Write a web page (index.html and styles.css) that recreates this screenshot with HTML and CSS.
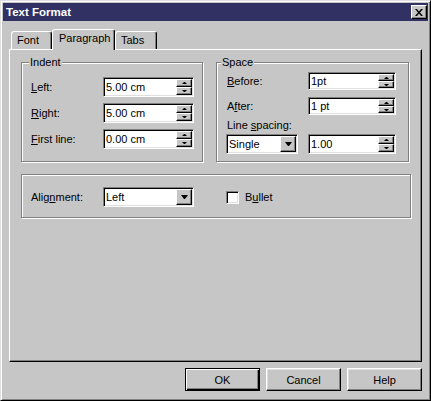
FILE: index.html
```html
<!DOCTYPE html>
<html lang="en">
<head>
    <meta charset="UTF-8">
    <title>Text Format</title>
    <link rel="stylesheet" href="styles.css">
</head>
<body>
    <div class="window">
        <div class="titlebar">
            <span class="title">Text Format</span>
            <span class="close">
                <svg width="8" height="7" viewBox="0 0 8 7"><path d="M0 0h2l2 2.5L6 0h2L5 3.5 8 7H6L4 4.5 2 7H0l3-3.5z" fill="#000"/></svg>
            </span>
        </div>

        <div class="tabs">
            <div class="tab font-tab">Font</div>
            <div class="tab active">Paragraph</div>
            <div class="tab tabs-tab">Tabs</div>
        </div>

        <div class="panel">
            <div class="top-row">
                <fieldset class="group indent">
                    <legend>Indent</legend>
                    <div class="row">
                        <label><u>L</u>eft:</label>
                        <div class="spin"><span class="val">5.00 cm</span><span class="arrows"><i class="up"></i><i class="down"></i></span></div>
                    </div>
                    <div class="row">
                        <label><u>R</u>ight:</label>
                        <div class="spin"><span class="val">5.00 cm</span><span class="arrows"><i class="up"></i><i class="down"></i></span></div>
                    </div>
                    <div class="row">
                        <label><u>F</u>irst line:</label>
                        <div class="spin"><span class="val">0.00 cm</span><span class="arrows"><i class="up"></i><i class="down"></i></span></div>
                    </div>
                </fieldset>

                <fieldset class="group space">
                    <legend>Space</legend>
                    <div class="srow">
                        <label><u>B</u>efore:</label>
                        <div class="spin small"><span class="val">1pt</span><span class="arrows"><i class="up"></i><i class="down"></i></span></div>
                    </div>
                    <div class="srow after">
                        <label>A<u>f</u>ter:</label>
                        <div class="spin small"><span class="val">1 pt</span><span class="arrows"><i class="up"></i><i class="down"></i></span></div>
                    </div>
                    <div class="sub-label">Line <u>s</u>pacing:</div>
                    <div class="srow2">
                        <div class="dropdown single"><span class="val">Single</span><span class="dd-btn"></span></div>
                        <div class="spin"><span class="val">1.00</span><span class="arrows"><i class="up"></i><i class="down"></i></span></div>
                    </div>
                </fieldset>
            </div>

            <div class="group align">
                <label class="align-label">Alig<u>n</u>ment:</label>
                <div class="dropdown"><span class="val">Left</span><span class="dd-btn"></span></div>
                <span class="check"></span>
                <label class="check-label">B<u>u</u>llet</label>
            </div>
        </div>

        <div class="buttons">
            <div class="btn default">OK</div>
            <div class="btn">Cancel</div>
            <div class="btn">Help</div>
        </div>
    </div>
</body>
</html>
```

FILE: styles.css
```css
/* Base */
body {
    margin: 0;
    font-family: "Liberation Sans", Arial, sans-serif;
    font-size: 11px;
    color: #000;
    background: #c6c6c6;
}
u {
    text-decoration-thickness: 1px;
    text-underline-offset: 1px;
}

/* Window frame */
.window {
    width: 431px;
    height: 401px;
    box-sizing: border-box;
    background: #c6c6c6;
    border: 1px solid;
    border-color: #dfdfdf #000 #000 #dfdfdf;
    box-shadow: inset 1px 1px #fff, inset -1px -1px #808080;
    padding: 2px;
    display: flex;
    flex-direction: column;
}
.titlebar {
    height: 18px;
    flex: none;
    background: #313163;
    color: #fff;
    display: flex;
    align-items: center;
    justify-content: space-between;
    padding: 0 1px 0 3px;
}
.title {
    font-weight: bold;
    font-size: 11.5px;
}
.close {
    width: 16px;
    height: 14px;
    box-sizing: border-box;
    background: #c6c6c6;
    border: 1px solid;
    border-color: #fff #000 #000 #fff;
    box-shadow: inset -1px -1px #808080;
    display: flex;
    align-items: center;
    justify-content: center;
}

/* Tabs */
.tabs {
    display: flex;
    align-items: flex-end;
    height: 20px;
    margin: 8px 0 0 8px;
    position: relative;
    z-index: 1;
}
.tab {
    height: 18px;
    box-sizing: border-box;
    border: 1px solid;
    border-bottom: none;
    border-color: #fff #000 #000 #fff;
    border-radius: 3px 3px 0 0;
    box-shadow: inset -1px 0 #808080;
    padding: 2px 0 0 5px;
    line-height: 13px;
}
.font-tab { width: 41px; }
.tabs-tab { width: 42px; }
.tab.active {
    width: 63px;
    height: 21px;
    margin-bottom: -1px;
    padding-left: 6px;
    background: #c6c6c6;
}

/* Tab page */
.panel {
    margin-left: 6px;
    width: 413px;
    height: 313px;
    flex: none;
    box-sizing: border-box;
    border: 1px solid;
    border-color: #fff #000 #000 #fff;
    box-shadow: inset -1px -1px #808080;
    padding: 6px 0 0 11px;
}
.top-row {
    display: flex;
    gap: 13px;
}
.group {
    margin: 0;
    min-width: 0;
    box-sizing: border-box;
    border: 1px solid #808080;
    box-shadow: 1px 1px 0 #fff, inset 1px 1px 0 #fff;
}
.group legend {
    padding: 0 1px;
    line-height: 13px;
    background: #c6c6c6;
}
.indent {
    width: 182px;
    height: 106px;
    padding: 8px 0 0 9px;
}
.indent legend { margin-left: -2px; }
.space {
    width: 193px;
    height: 106px;
    padding: 3px 0 0 10px;
}
.space legend { margin-left: -6px; }

.row {
    display: grid;
    grid-template-columns: 72px 91px;
    align-items: center;
    height: 20px;
}
.row + .row { margin-top: 6px; }

.srow {
    display: grid;
    grid-template-columns: 81px 88px;
    align-items: center;
    height: 18px;
}
.srow.after { margin-top: 7px; }
.sub-label {
    margin-top: 4px;
    line-height: 13px;
}
.srow2 {
    display: grid;
    grid-template-columns: 82px 88px;
    margin: 2px 0 0 -1px;
    height: 20px;
}

/* Sunken fields */
.spin, .dropdown {
    height: 20px;
    box-sizing: border-box;
    background: #fff;
    border: 1px solid;
    border-color: #808080 #fff #fff #808080;
    box-shadow: inset 1px 1px #000, inset -1px -1px #dfdfdf;
    padding: 1px;
    display: flex;
}
.spin.small { height: 18px; }
.val {
    flex: 1;
    padding-left: 1px;
    display: flex;
    align-items: center;
}
.arrows {
    width: 16px;
    display: flex;
    flex-direction: column;
}
.arrows i, .dd-btn {
    flex: 1;
    box-sizing: border-box;
    background: #c6c6c6;
    border: 1px solid;
    border-color: #fff #000 #000 #fff;
    box-shadow: inset -1px -1px #808080;
    display: flex;
    align-items: center;
    justify-content: center;
}
.arrows .up::after {
    content: "";
    width: 1px;
    border-left: 2px solid transparent;
    border-right: 2px solid transparent;
    border-bottom: 2px solid #000;
}
.arrows .down::after {
    content: "";
    width: 1px;
    border-left: 2px solid transparent;
    border-right: 2px solid transparent;
    border-top: 2px solid #000;
}
.dropdown { width: 91px; }
.dropdown.single { width: 72px; }
.dd-btn {
    flex: none;
    width: 16px;
}
.dd-btn::after {
    content: "";
    width: 1px;
    border-left: 3px solid transparent;
    border-right: 3px solid transparent;
    border-top: 4px solid #000;
}

/* Alignment group */
.align {
    width: 390px;
    height: 44px;
    margin-top: 12px;
    padding: 12px 0 0 9px;
    display: flex;
    align-items: flex-start;
}
.align-label {
    width: 72px;
    line-height: 20px;
}
.check {
    width: 13px;
    height: 13px;
    box-sizing: border-box;
    background: #fff;
    border: 1px solid;
    border-color: #808080 #fff #fff #808080;
    box-shadow: inset 1px 1px #000, inset -1px -1px #dfdfdf;
    margin: 4px 0 0 32px;
}
.check-label {
    margin-left: 6px;
    line-height: 20px;
}

/* Dialog buttons */
.buttons {
    display: flex;
    justify-content: flex-end;
    gap: 6px;
    margin-top: 6px;
    padding-right: 6px;
}
.btn {
    width: 75px;
    height: 23px;
    box-sizing: border-box;
    border: 1px solid;
    border-color: #fff #000 #000 #fff;
    box-shadow: inset -1px -1px #808080, inset 1px 1px #dfdfdf;
    display: flex;
    align-items: center;
    justify-content: center;
}
.btn.default {
    border-color: #000;
    box-shadow: inset 1px 1px #fff, inset -1px -1px #000, inset -2px -2px #808080;
}
```
